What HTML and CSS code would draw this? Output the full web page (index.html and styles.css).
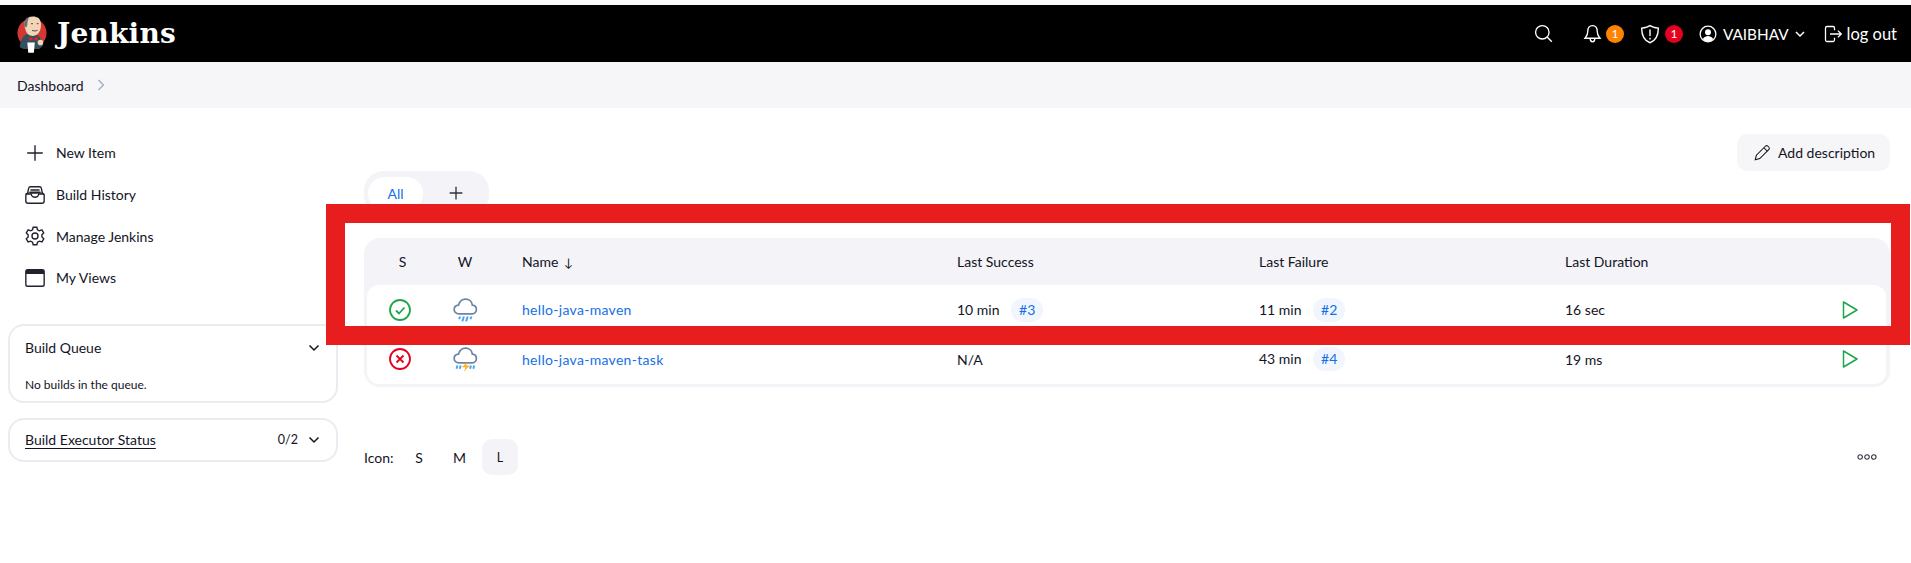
FILE: index.html
```html
<!DOCTYPE html>
<html lang="en">
<head>
    <meta charset="UTF-8" />
    <title>Dashboard [Jenkins]</title>
    <link rel="stylesheet" href="styles.css">
</head>
<body>
    <div class="strip"></div>
    <header class="topbar">
        <a class="brand">
            <svg class="logo" viewBox="0 0 32 42" width="30" height="40">
                <circle cx="16" cy="20" r="15.500" fill="#d33833"/>
                <path d="M3 35c0-7 4-13 8-14l10 1c4 2 6 6 7 11l-4 4H7z" fill="#335061"/>
                <path d="M9 6c2-4 10-5 14-2 3 3 3 8 2 12-1 4-4 7-8 7-4 0-7-2-8-7-1-3-2-7 0-10z" fill="#f0d6b7"/>
                <path d="M9 6c1-2 3-3 5-4-2 2-3 5-3 9l-1 3-2-1C7 10 8 8 9 6z" fill="#6d6b6d"/>
                <path d="M15 10h2M21 10h2M16 17c2 1 4 1 6 0" stroke="#49343a" stroke-width="1" fill="none"/>
                <path d="M13 24l4.500 2 4.500-2v4.500l-4.500-2-4.500 2z" fill="#e2231a"/>
                <path d="M11 30h8l-1 11h-6z" fill="#fff"/>
                <circle cx="25" cy="30" r="3" fill="#f0d6b7"/>
            </svg>
            <span class="brand-name">Jenkins</span>
        </a>
        <div class="topbar-right">
            <svg class="top-icon search-icon" viewBox="0 0 24 24"><circle cx="10.500" cy="10.500" r="8.500"/><path d="M16.500 16.500l6 6"/></svg>
            <span class="top-group bell">
                <svg class="top-icon" viewBox="0 0 24 24"><path d="M12 2c-4 0-6 3-6 7.500 0 5-2 6.500-3.500 8.500h19c-1.500-2-3.500-3.500-3.500-8.500C18 5 16 2 12 2z"/><path d="M9 18c0 2.500 1 4.500 3 4.500s3-2 3-4.500"/></svg>
                <span class="badge badge-orange">1</span>
            </span>
            <span class="top-group shield">
                <svg class="top-icon" viewBox="0 0 24 24"><path d="M12 2c3 2 6.500 2.500 10 3 0 9-2.500 14.500-10 17.500C4.500 19.500 2 14 2 5c3.500-.5 7-1 10-3z"/><path d="M12 6.500v8M12 16.500v2"/></svg>
                <span class="badge badge-red">1</span>
            </span>
            <span class="top-group user">
                <svg class="top-icon" viewBox="0 0 24 24"><circle cx="12" cy="12" r="10.500"/><circle class="solid" cx="12" cy="9.500" r="4"/><path class="solid" d="M5 18.500c2-3 4.500-4 7-4s5 1 7 4c-2 2-4.500 3.500-7 3.500s-5-1.500-7-3.500z"/></svg>
                <span class="user-name">VAIBHAV</span>
                <svg class="caret" viewBox="0 0 12 12"><path d="M2 4l4 4 4-4"/></svg>
            </span>
            <span class="top-group logout">
                <svg class="top-icon" viewBox="0 0 24 24"><path d="M14 7V4a2 2 0 0 0-2-2H4a2 2 0 0 0-2 2v16a2 2 0 0 0 2 2h8a2 2 0 0 0 2-2v-3"/><path d="M8 12h15M18.500 7.500l4.500 4.500-4.500 4.500"/></svg>
                <span>log out</span>
            </span>
        </div>
    </header>

    <nav class="crumbs">
        <span>Dashboard</span>
        <svg class="crumb-arrow" viewBox="0 0 12 16"><path d="M3 2l6 6-6 6"/></svg>
    </nav>

    <div class="layout">
        <aside class="sidebar">
            <ul class="tasks">
                <li>
                    <svg class="task-icon" viewBox="0 0 24 24"><path d="M12 3.500v17M3.500 12h17"/></svg>
                    New Item
                </li>
                <li>
                    <svg class="task-icon" viewBox="0 0 24 24"><path d="M4 10l1-5c.2-1 1-2 2-2h10c1 0 1.800 1 2 2l1 5"/><rect x="2" y="10" width="20" height="11" rx="2.500"/><path d="M7 6.500h10M6 9h12M2 11h6c0 2 2 3.500 4 3.500s4-1.500 4-3.500h6"/></svg>
                    Build History
                </li>
                <li>
                    <svg class="task-icon" viewBox="0 0 24 24"><path d="M10 2.500h4l.7 2.800 2.100 1 2.700-1 2 3.400-2 2 .1 2.300 2 2-2 3.400-2.800-.8-2 1.200-.8 2.700h-4l-.7-2.800-2.100-1.100-2.700.8-2-3.400 2-2v-2.300l-2-2 2-3.400 2.800 1 2-1.100z"/><circle cx="12" cy="12" r="3.300"/></svg>
                    Manage Jenkins
                </li>
                <li>
                    <svg class="task-icon" viewBox="0 0 24 24"><rect x="2" y="3" width="20" height="18" rx="2"/><path class="bar" d="M2 5a2 2 0 0 1 2-2h16a2 2 0 0 1 2 2v2.500H2z"/></svg>
                    My Views
                </li>
            </ul>

            <section class="card queue">
                <div class="card-head">
                    <span>Build Queue</span>
                    <svg class="chevron" viewBox="0 0 12 12"><path d="M1.500 3.500L6 8l4.500-4.500"/></svg>
                </div>
                <p class="card-note">No builds in the queue.</p>
            </section>

            <section class="card executors">
                <div class="card-head">
                    <span class="underlined">Build Executor Status</span>
                    <span class="card-count">0/2</span>
                    <svg class="chevron" viewBox="0 0 12 12"><path d="M1.500 3.500L6 8l4.500-4.500"/></svg>
                </div>
            </section>
        </aside>

        <main class="content">
            <div class="actions">
                <button class="add-desc">
                    <svg class="pencil" viewBox="0 0 24 24"><path d="M3 21l1.500-6L16.500 3c1-1 2.500-1 3.500 0l1 1c1 1 1 2.500 0 3.500L9 19.500z"/><path d="M14.500 5l4.500 4.500"/></svg>
                    Add description
                </button>
            </div>

            <div class="tabs">
                <span class="tab active">All</span>
                <span class="tab-add"><svg class="plus" viewBox="0 0 24 24"><path d="M12 3.500v17M3.500 12h17"/></svg></span>
            </div>

            <div class="table-wrap">
                <table class="jobs">
                    <colgroup>
                        <col class="col-s"><col class="col-w"><col class="col-name"><col class="col-success"><col class="col-failure"><col class="col-duration"><col>
                    </colgroup>
                    <thead>
                        <tr>
                            <th class="center">S</th>
                            <th class="center">W</th>
                            <th class="name-cell">Name <span class="sort">↓</span></th>
                            <th>Last Success</th>
                            <th>Last Failure</th>
                            <th>Last Duration</th>
                            <th></th>
                        </tr>
                    </thead>
                    <tbody>
                        <tr>
                            <td class="center status-cell">
                                <svg class="status" viewBox="0 0 24 24"><circle class="ok" cx="12" cy="12" r="10"/><path class="ok" d="M8 12.500l3 3 5.500-6"/></svg>
                            </td>
                            <td class="center">
                                <svg class="weather" viewBox="0 0 24 24"><path class="cloud" d="M6.500 15.500C3.500 15.500 2 13.500 2 11.500s1.500-3.800 4-4C7 4 9.500 2 12.500 2c3.500 0 6 2.500 6.300 5.500 2.700.2 3.700 2 3.700 4s-1.500 4-3.700 4z"/><path class="rain" d="M7.500 18l-1 2.500M11 18l-1.500 4.500M14.500 18l-1.500 4.500M18 18l-1 2.500"/></svg>
                            </td>
                            <td class="name-cell"><a class="job-link">hello-java-maven</a></td>
                            <td>10 min <a class="build-tag">#3</a></td>
                            <td>11 min <a class="build-tag">#2</a></td>
                            <td>16 sec</td>
                            <td class="run">
                                <svg class="play" viewBox="0 0 18 20"><path d="M2.500 2v16L16 10z"/></svg>
                            </td>
                        </tr>
                        <tr>
                            <td class="center status-cell">
                                <svg class="status" viewBox="0 0 24 24"><circle class="bad" cx="12" cy="12" r="10"/><path class="bad" d="M8.500 8.500l7 7M15.500 8.500l-7 7"/></svg>
                            </td>
                            <td class="center">
                                <svg class="weather" viewBox="0 0 24 24"><path class="cloud" d="M6.500 15.500C3.500 15.500 2 13.500 2 11.500s1.500-3.800 4-4C7 4 9.500 2 12.500 2c3.500 0 6 2.500 6.300 5.500 2.700.2 3.700 2 3.700 4s-1.500 4-3.700 4z"/><path class="rain" d="M5 18l-.8 3M8 18l-.8 3M17.500 18l-.8 3M20.500 18l-.8 3"/><path class="bolt" d="M14.500 14.500l-5.500 5h3.500l-1.500 4 5.500-5.500h-3.500z"/></svg>
                            </td>
                            <td class="name-cell"><a class="job-link">hello-java-maven-task</a></td>
                            <td>N/A</td>
                            <td>43 min <a class="build-tag">#4</a></td>
                            <td>19 ms</td>
                            <td class="run">
                                <svg class="play" viewBox="0 0 18 20"><path d="M2.500 2v16L16 10z"/></svg>
                            </td>
                        </tr>
                    </tbody>
                </table>
            </div>

            <div class="legend">
                <div class="sizes">
                    <span class="sizes-label">Icon:</span>
                    <span class="size">S</span>
                    <span class="size">M</span>
                    <span class="size active">L</span>
                </div>
                <svg class="more" viewBox="0 0 22 8"><circle cx="3.500" cy="4" r="2.500"/><circle cx="11" cy="4" r="2.500"/><circle cx="18.500" cy="4" r="2.500"/></svg>
            </div>
        </main>
    </div>

    <div class="highlight"></div>
</body>
</html>
```

FILE: styles.css
```css
* {
    box-sizing: border-box;
}

html, body {
    height: 100%;
}

body {
    margin: 0;
    position: relative;
    overflow: hidden;
    font-family: "Lato", "Noto Sans", sans-serif;
    font-size: 14px;
    color: #14141f;
    background-color: #fff;
}

.strip {
    height: 5px;
    background-color: #fafafa;
}

/* top bar */
.topbar {
    height: 57px;
    background-color: #000;
    color: #fff;
    display: flex;
    align-items: center;
    justify-content: space-between;
    padding: 0 14px 0 17px;
}

.brand {
    display: flex;
    align-items: center;
    gap: 10px;
}

.logo {
    display: block;
}

.brand-name {
    font-family: "DejaVu Serif", serif;
    font-weight: bold;
    font-size: 28px;
    letter-spacing: 0.2px;
}

.topbar-right {
    display: flex;
    align-items: center;
    font-size: 16.500px;
}

.user-name {
    font-size: 15.300px;
}

.top-icon {
    width: 18px;
    height: 18px;
    fill: none;
    stroke: #fff;
    stroke-width: 1.700;
    flex: none;
}

.top-icon .solid {
    fill: #fff;
    stroke: none;
}

.search-icon {
    width: 19px;
    height: 19px;
    margin-right: 30px;
}

.top-group {
    display: flex;
    align-items: center;
}

.bell .top-icon {
    width: 19px;
    height: 19px;
}

.shield .top-icon {
    width: 20px;
    height: 20px;
}

.bell {
    margin-right: 16px;
    gap: 4px;
}

.shield {
    margin-right: 16px;
    gap: 5px;
}

.user {
    margin-right: 18px;
    gap: 6px;
}

.user .caret {
    margin-left: -1px;
}

.logout {
    gap: 5px;
}

.badge {
    width: 18px;
    height: 18px;
    border-radius: 50%;
    color: #fff;
    font-size: 12px;
    display: flex;
    align-items: center;
    justify-content: center;
}

.badge-orange {
    background-color: #ff8200;
}

.badge-red {
    background-color: #e6001f;
}

.caret {
    width: 12px;
    height: 12px;
    fill: none;
    stroke: #fff;
    stroke-width: 1.500;
}

/* breadcrumb */
.crumbs {
    height: 46px;
    background-color: #f6f6f9;
    display: flex;
    align-items: center;
    padding: 0 17px;
    gap: 12px;
}

.crumb-arrow {
    width: 10px;
    height: 14px;
    fill: none;
    stroke: #9aa9c7;
    stroke-width: 1.400;
}

.layout {
    display: flex;
}

/* sidebar */
.sidebar {
    width: 338px;
    padding: 24px 0 0 8px;
    flex: none;
}

.tasks {
    list-style-type: none;
    margin: 0 0 25px;
    padding: 0;
}

.tasks li {
    height: 41.700px;
    display: flex;
    align-items: center;
    gap: 10px;
    padding-left: 16px;
}

.task-icon {
    width: 22px;
    height: 22px;
    fill: none;
    stroke: #22222e;
    stroke-width: 1.500;
}

.task-icon .bar {
    fill: #22222e;
    stroke: none;
}

.card {
    border: 2px solid #ebebf1;
    border-radius: 16px;
    width: 330px;
    padding: 0 16px 0 15px;
    margin-bottom: 15px;
}

.card-head {
    display: flex;
    align-items: center;
    height: 40px;
}

.card-head > span:first-child {
    flex: 1;
}

.card-count {
    font-size: 12.500px;
    margin-right: 10px;
}

.underlined {
    text-decoration: underline;
    text-underline-offset: 3px;
}

.chevron {
    width: 12px;
    height: 12px;
    fill: none;
    stroke: #14141f;
    stroke-width: 1.500;
}

.queue {
    height: 79px;
}

.queue .card-head {
    height: 44px;
}

.card-note {
    margin: 7px 0 0;
    font-size: 12px;
}

/* main column */
.content {
    flex: 1;
    min-width: 0;
    padding: 26px 21px 0 26px;
}

.actions {
    display: flex;
    justify-content: flex-end;
    height: 37px;
}

.add-desc {
    display: flex;
    align-items: center;
    gap: 7px;
    width: 153px;
    height: 37px;
    padding: 0 0 0 16px;
    border: none;
    border-radius: 10px;
    background-color: #f6f6f9;
    font-family: inherit;
    font-size: 14px;
    color: #14141f;
}

.pencil {
    width: 18px;
    height: 18px;
    fill: none;
    stroke: #14141f;
    stroke-width: 1.400;
}

.tabs {
    display: inline-flex;
    align-items: center;
    width: 125px;
    height: 44px;
    padding: 4px;
    border-radius: 20px;
    background-color: #f3f3f8;
    vertical-align: top;
}

.tab {
    width: 55px;
    height: 33px;
    border-radius: 16px;
    background-color: #fff;
    color: #1470e6;
    display: flex;
    align-items: center;
    justify-content: center;
}

.tab-add {
    display: flex;
    margin-left: 24px;
}

.plus {
    width: 18px;
    height: 18px;
    fill: none;
    stroke: #33333f;
    stroke-width: 1.800;
}

.table-wrap {
    margin-top: 23px;
    background-color: #f3f3f8;
    border-radius: 16px;
    padding: 0 4px 4px 3px;
    height: 149px;
}

.jobs {
    width: 100%;
    border-collapse: collapse;
    table-layout: fixed;
}

.col-s {
    width: 71px;
}

.col-w {
    width: 54px;
}

.col-name {
    width: 465px;
}

.col-success {
    width: 302px;
}

.col-failure {
    width: 306px;
}

.col-duration {
    width: 276px;
}

.jobs th {
    height: 47px;
    font-weight: 400;
    text-align: left;
    padding: 0;
}

.jobs td {
    height: 50px;
    padding: 0;
    background-color: #fff;
}

.jobs tbody tr:first-child td {
    height: 49px;
}

.jobs th.center,
.jobs td.center {
    text-align: center;
}

.jobs td.status-cell {
    padding-right: 6px;
}

.jobs .name-cell {
    padding-left: 30px;
}

.jobs tbody tr:first-child td:first-child {
    border-top-left-radius: 12px;
}

.jobs tbody tr:first-child td:last-child {
    border-top-right-radius: 12px;
}

.jobs tbody tr:last-child td:first-child {
    border-bottom-left-radius: 12px;
}

.jobs tbody tr:last-child td:last-child {
    border-bottom-right-radius: 12px;
}

.sort {
    font-size: 12px;
    margin-left: 2px;
}

.status {
    width: 24px;
    height: 24px;
    display: block;
    margin: 0 auto;
    fill: none;
    stroke-width: 1.800;
}

.ok {
    stroke: #1ea64b;
}

.bad {
    stroke: #e6001f;
}

.weather {
    width: 26px;
    height: 26px;
    display: block;
    margin: 0 auto;
    fill: none;
}

.cloud {
    stroke: #6d83a5;
    stroke-width: 1.600;
    fill: #fff;
}

.rain {
    stroke: #45a5f0;
    stroke-width: 1.800;
}

.bolt {
    fill: #fdb022;
    stroke: none;
}

.job-link {
    color: #1470e6;
    letter-spacing: 0.300px;
}

.build-tag {
    display: inline-block;
    height: 24px;
    line-height: 24px;
    margin-left: 8px;
    padding: 0 8px;
    border-radius: 12px;
    background-color: #f1f6fe;
    color: #1470e6;
}

.run {
    text-align: left;
}

.play {
    width: 18px;
    height: 20px;
    display: block;
    fill: none;
    stroke: #1ea64b;
    stroke-width: 1.500;
    stroke-linejoin: round;
}

/* icon size legend */
.legend {
    display: flex;
    align-items: center;
    justify-content: space-between;
    margin-top: 52px;
    padding-right: 13px;
}

.sizes {
    display: flex;
    align-items: center;
}

.sizes-label {
    width: 37px;
}

.size {
    width: 36px;
    height: 36px;
    margin-right: 4.500px;
    border-radius: 10px;
    display: flex;
    align-items: center;
    justify-content: center;
}

.size.active {
    background-color: #f3f3f8;
    font-size: 12.500px;
}

.more {
    width: 20px;
    height: 8px;
    fill: none;
    stroke: #33333f;
    stroke-width: 1.200;
}

/* annotation drawn on top of the screenshot */
.highlight {
    position: absolute;
    left: 326px;
    top: 204px;
    width: 1584px;
    height: 141px;
    border: 19px solid #e81e1e;
    pointer-events: none;
}
```
